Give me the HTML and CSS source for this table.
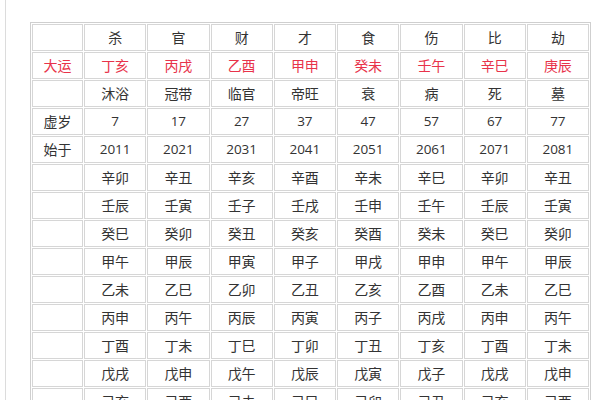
FILE: index.html
```html
<!DOCTYPE html>
<html lang="zh-CN">
<head>
<meta charset="utf-8">
<link rel="stylesheet" href="styles.css">
</head>
<body>
<div class="page">
<table class="dayun">
<colgroup><col class="c0"><col><col><col><col><col><col><col><col></colgroup>
<tr><td></td><td>杀</td><td>官</td><td>财</td><td>才</td><td>食</td><td>伤</td><td>比</td><td>劫</td></tr>
<tr class="red"><td>大运</td><td>丁亥</td><td>丙戌</td><td>乙酉</td><td>甲申</td><td>癸未</td><td>壬午</td><td>辛巳</td><td>庚辰</td></tr>
<tr><td></td><td>沐浴</td><td>冠带</td><td>临官</td><td>帝旺</td><td>衰</td><td>病</td><td>死</td><td>墓</td></tr>
<tr class="num"><td>虚岁</td><td>7</td><td>17</td><td>27</td><td>37</td><td>47</td><td>57</td><td>67</td><td>77</td></tr>
<tr class="num"><td>始于</td><td>2011</td><td>2021</td><td>2031</td><td>2041</td><td>2051</td><td>2061</td><td>2071</td><td>2081</td></tr>
<tr><td></td><td>辛卯</td><td>辛丑</td><td>辛亥</td><td>辛酉</td><td>辛未</td><td>辛巳</td><td>辛卯</td><td>辛丑</td></tr>
<tr><td></td><td>壬辰</td><td>壬寅</td><td>壬子</td><td>壬戌</td><td>壬申</td><td>壬午</td><td>壬辰</td><td>壬寅</td></tr>
<tr><td></td><td>癸巳</td><td>癸卯</td><td>癸丑</td><td>癸亥</td><td>癸酉</td><td>癸未</td><td>癸巳</td><td>癸卯</td></tr>
<tr><td></td><td>甲午</td><td>甲辰</td><td>甲寅</td><td>甲子</td><td>甲戌</td><td>甲申</td><td>甲午</td><td>甲辰</td></tr>
<tr><td></td><td>乙未</td><td>乙巳</td><td>乙卯</td><td>乙丑</td><td>乙亥</td><td>乙酉</td><td>乙未</td><td>乙巳</td></tr>
<tr><td></td><td>丙申</td><td>丙午</td><td>丙辰</td><td>丙寅</td><td>丙子</td><td>丙戌</td><td>丙申</td><td>丙午</td></tr>
<tr><td></td><td>丁酉</td><td>丁未</td><td>丁巳</td><td>丁卯</td><td>丁丑</td><td>丁亥</td><td>丁酉</td><td>丁未</td></tr>
<tr><td></td><td>戊戌</td><td>戊申</td><td>戊午</td><td>戊辰</td><td>戊寅</td><td>戊子</td><td>戊戌</td><td>戊申</td></tr>
<tr><td></td><td>己亥</td><td>己酉</td><td>己未</td><td>己巳</td><td>己卯</td><td>己丑</td><td>己亥</td><td>己酉</td></tr>
</table>
</div>
</body>
</html>
```
FILE: styles.css
```css
html, body {
  margin: 0;
  padding: 0;
  background: #fff;
  overflow: hidden;
}
body {
  height: 400px;
}
.page {
  margin-left: 5px;
  border-left: 1px solid #dcdcdc;
  height: 100%;
  padding: 22px 0 0 24px;
  box-sizing: border-box;
}
.dayun {
  table-layout: fixed;
  width: 561px;
  border-collapse: separate;
  border-spacing: 1px;
  border: 1px solid #cfcfcf;
  font-family: "Noto Sans CJK SC", "Noto Sans", sans-serif;
  font-size: 14px;
  color: #333;
}
.dayun col.c0 {
  width: 51px;
}
.dayun td {
  height: 25px;
  padding: 0;
  border: 1px solid #d6d6d6;
  text-align: center;
  vertical-align: middle;
  line-height: 25px;
}
.dayun tr.red td {
  color: #e8334a;
}
.dayun tr.num td:not(:first-child) {
  font-family: "Open Sans", "Noto Sans", sans-serif;
  font-size: 13.5px;
}
```
